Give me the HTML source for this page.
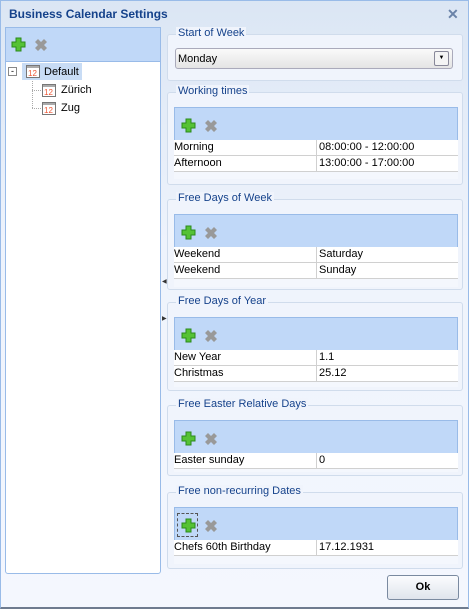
<!DOCTYPE html><html><head><style>
*{box-sizing:border-box;margin:0;padding:0}
body{width:469px;height:609px;overflow:hidden;font-family:"Liberation Sans",Arial,sans-serif;font-size:11px;}
.win{position:absolute;left:0;top:0;width:469px;height:609px;border:1px solid #99bbe8;border-bottom:2px solid #6e7b8f;background:linear-gradient(#dbe6f4,#eef3fc 40%,#f4f7fe);}
.title{position:absolute;left:8px;top:6px;font-weight:bold;color:#15428b;font-size:12px;}
.close{position:absolute;left:446px;top:5px;color:#6a83a8;font-size:14px;font-weight:bold}
.abs{position:absolute}
.tb{background:#c0d8f8;border:1px solid #99bbe8}
.fs{position:absolute;left:166px;width:296px;border:1px solid #d0dcec;border-radius:3px;background:#f0f4fc}
.lg{position:absolute;left:8px;top:-8px;background:#f0f4fc;padding:0 2px;color:#15428b;font-size:11px;}
.grid{position:absolute;left:6px;width:284px;background:#f4f7fd}
.row{position:absolute;left:0;width:284px;height:16px;background:#fff;border-bottom:1px solid #d0d0d0;font-size:11px;line-height:15px;color:#000}
.row span{position:absolute;top:0}
.row .c2{left:142px;border-left:1px solid #d0d0d0;padding-left:2px;height:16px}
</style></head><body>
<div class="win">
<div class="title">Business Calendar Settings</div>
<div class="close">✕</div>
<div class="abs tb" style="left:4px;top:26px;width:156px;height:35px"></div>
<div class="abs" style="left:4px;top:60px;width:156px;height:513px;background:#fff;border:1px solid #99bbe8;border-radius:0 0 3px 3px"></div>
<svg class="abs" style="left:10px;top:36px" width="40" height="16"><path d="M5 1h5v4h4v5h-4v4H5v-4H1V5h4z" fill="#55c235" stroke="#2c8a1c"/><path d="M27 2l3 3 3-3 3 3-3 3 3 3-3 3-3-3-3 3-3-3 3-3-3-3z" fill="#999"/></svg>
<div class="abs" style="left:7px;top:66px;width:9px;height:9px;border:1px solid #888;background:#fff;font-size:9px;line-height:6px;text-align:center">-</div>
<div class="abs" style="left:21px;top:62px;width:60px;height:17px;background:#c8dcf5"></div>
<div class="abs" style="left:31px;top:80px;width:1px;height:27px;border-left:1px dotted #aaa"></div>
<div class="abs" style="left:31px;top:89px;width:9px;border-top:1px dotted #aaa"></div>
<div class="abs" style="left:31px;top:107px;width:9px;border-top:1px dotted #aaa"></div>
<svg class="abs" style="left:25px;top:63px" width="14" height="14"><rect x=".5" y="1.5" width="13" height="12" fill="#fff" stroke="#777"/><rect x="1" y="2" width="12" height="2" fill="#aaa"/><text x="2" y="12" font-size="8" fill="#e53" font-family="Liberation Sans">12</text></svg>
<div class="abs" style="left:43px;top:65px;font-size:11px">Default</div>
<svg class="abs" style="left:41px;top:82px" width="14" height="14"><rect x=".5" y="1.5" width="13" height="12" fill="#fff" stroke="#777"/><rect x="1" y="2" width="12" height="2" fill="#aaa"/><text x="2" y="12" font-size="8" fill="#e53" font-family="Liberation Sans">12</text></svg>
<div class="abs" style="left:60px;top:83px">Zürich</div>
<svg class="abs" style="left:41px;top:100px" width="14" height="14"><rect x=".5" y="1.5" width="13" height="12" fill="#fff" stroke="#777"/><rect x="1" y="2" width="12" height="2" fill="#aaa"/><text x="2" y="12" font-size="8" fill="#e53" font-family="Liberation Sans">12</text></svg>
<div class="abs" style="left:60px;top:101px">Zug</div>
<div class="abs" style="left:161px;top:277px;font-size:6px;color:#333">◀</div>
<div class="abs" style="left:161px;top:314px;font-size:6px;color:#333">▶</div>

<div class="fs" style="top:33px;height:47px"><div class="lg">Start of Week</div>
<div class="abs" style="left:7px;top:13px;width:278px;height:21px;border:1px solid #aab;border-radius:3px;background:linear-gradient(#fafafa,#e4e4e4);padding:4px 2px">Monday</div>
<div class="abs" style="left:266px;top:16px;width:15px;height:15px;border:1px solid #889;border-radius:2px;background:#f4f4f4;font-size:6px;text-align:center;line-height:13px">▼</div></div>

<div class="fs" style="top:91px;height:93px"><div class="lg">Working times</div>
<div class="grid" style="top:14px;height:72px"><div class="tb" style="height:34px;position:relative"><svg class="abs" style="left:6px;top:10px" width="40" height="16"><path d="M5 1h5v4h4v5h-4v4H5v-4H1V5h4z" fill="#55c235" stroke="#2c8a1c"/><path d="M27 2l3 3 3-3 3 3-3 3 3 3-3 3-3-3-3 3-3-3 3-3-3-3z" fill="#999"/></svg></div>
<div class="row" style="top:33px"><span>Morning</span><span class="c2">08:00:00 - 12:00:00</span></div>
<div class="row" style="top:49px"><span>Afternoon</span><span class="c2">13:00:00 - 17:00:00</span></div></div></div>

<div class="fs" style="top:198px;height:91px"><div class="lg">Free Days of Week</div>
<div class="grid" style="top:14px;height:73px"><div class="tb" style="height:34px;position:relative"><svg class="abs" style="left:6px;top:10px" width="40" height="16"><path d="M5 1h5v4h4v5h-4v4H5v-4H1V5h4z" fill="#55c235" stroke="#2c8a1c"/><path d="M27 2l3 3 3-3 3 3-3 3 3 3-3 3-3-3-3 3-3-3 3-3-3-3z" fill="#999"/></svg></div>
<div class="row" style="top:33px"><span>Weekend</span><span class="c2">Saturday</span></div>
<div class="row" style="top:49px"><span>Weekend</span><span class="c2">Sunday</span></div></div></div>

<div class="fs" style="top:301px;height:89px"><div class="lg">Free Days of Year</div>
<div class="grid" style="top:14px;height:70px"><div class="tb" style="height:34px;position:relative"><svg class="abs" style="left:6px;top:10px" width="40" height="16"><path d="M5 1h5v4h4v5h-4v4H5v-4H1V5h4z" fill="#55c235" stroke="#2c8a1c"/><path d="M27 2l3 3 3-3 3 3-3 3 3 3-3 3-3-3-3 3-3-3 3-3-3-3z" fill="#999"/></svg></div>
<div class="row" style="top:33px"><span>New Year</span><span class="c2">1.1</span></div>
<div class="row" style="top:49px"><span>Christmas</span><span class="c2">25.12</span></div></div></div>

<div class="fs" style="top:404px;height:71px"><div class="lg">Free Easter Relative Days</div>
<div class="grid" style="top:14px;height:52px"><div class="tb" style="height:34px;position:relative"><svg class="abs" style="left:6px;top:10px" width="40" height="16"><path d="M5 1h5v4h4v5h-4v4H5v-4H1V5h4z" fill="#55c235" stroke="#2c8a1c"/><path d="M27 2l3 3 3-3 3 3-3 3 3 3-3 3-3-3-3 3-3-3 3-3-3-3z" fill="#999"/></svg></div>
<div class="row" style="top:33px"><span>Easter sunday</span><span class="c2">0</span></div></div></div>

<div class="fs" style="top:491px;height:77px"><div class="lg">Free non-recurring Dates</div>
<div class="grid" style="top:14px;height:57px"><div class="tb" style="height:34px;position:relative"><div class="abs" style="left:2px;top:5px;width:21px;height:24px;border:1px dashed #555"></div><svg class="abs" style="left:6px;top:10px" width="40" height="16"><path d="M5 1h5v4h4v5h-4v4H5v-4H1V5h4z" fill="#55c235" stroke="#2c8a1c"/><path d="M27 2l3 3 3-3 3 3-3 3 3 3-3 3-3-3-3 3-3-3 3-3-3-3z" fill="#999"/></svg></div>
<div class="row" style="top:33px"><span>Chefs 60th Birthday</span><span class="c2">17.12.1931</span></div></div></div>

<div class="abs" style="left:386px;top:574px;width:72px;height:25px;border:1px solid #7a8aa0;border-radius:3px;background:linear-gradient(#fbfcfe,#dfe4ec);text-align:center;line-height:23px;font-weight:bold;color:#000">Ok</div>
</div>
</body></html>
